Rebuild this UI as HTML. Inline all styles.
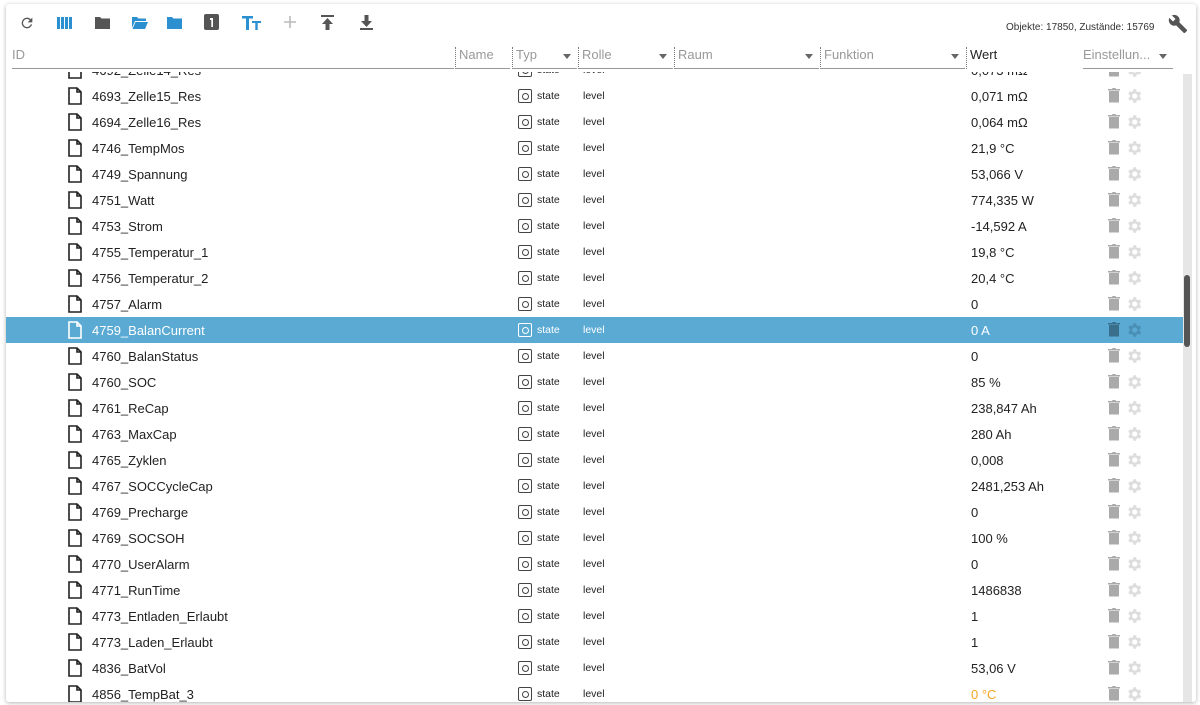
<!DOCTYPE html>
<html><head><meta charset="utf-8"><style>
*{box-sizing:border-box;margin:0;padding:0}
body{width:1200px;height:705px;background:#fff;font-family:"Liberation Sans",sans-serif;color:#222;overflow:hidden;position:relative}
.card{position:absolute;left:6px;top:4px;width:1190px;height:698px;background:#fff;box-shadow:0 1px 4px rgba(0,0,0,.3);border-radius:3px;overflow:hidden}
.tb svg{position:absolute}
.cnt{position:absolute;left:1000px;top:18px;font-size:10px;color:#333}
.hd{position:absolute;top:43px;font-size:13px;color:#999;height:22px;border-bottom:1px solid #999}
.hd.sep{border-left:1px dotted #777;padding-left:3px}
.arr{position:absolute;right:6px;top:7px;width:0;height:0;border-left:4px solid transparent;border-right:4px solid transparent;border-top:5px solid #666}
.body{position:absolute;left:0;top:68px;width:1177px;height:630px;overflow:hidden}
.row{position:absolute;left:0;width:1177px;height:26px;font-size:13px}
.row.sel{background:#5aaad4;color:#fff}
.fi{position:absolute;left:62px;top:4px}
.nm{position:absolute;left:86px;top:6px}
.ti{position:absolute;left:512px;top:6px;width:14px;height:14px;border:1.3px solid #444;border-radius:2px}
.ti:after{content:"";position:absolute;left:3px;top:3px;width:5px;height:5px;border:1.2px solid #444;border-radius:50%}
.sel .ti,.sel .ti:after{border-color:#fff}
.st{position:absolute;left:531px;top:7px;font-size:10.5px}
.lv{position:absolute;left:577px;top:7px;font-size:10.5px}
.wv{position:absolute;left:965px;top:6px}
.tr{position:absolute;left:1102px;top:5px}
.gr{position:absolute;left:1119px;top:4px}
.sb{position:absolute;left:1177px;top:70px;width:9px;height:628px;background:#e6e6e6}
.th{position:absolute;left:1px;top:201px;width:6px;height:72px;background:#555;border-radius:3px}
</style></head><body>
<div class="card">
<div class="tb">
<svg style="left:13px;top:11px" width="16" height="16" viewBox="0 0 24 24"><path fill="#555" d="M17.65 6.35A7.96 7.96 0 0 0 12 4a8 8 0 1 0 7.73 10h-2.08A6 6 0 1 1 12 6c1.66 0 3.140.69 4.22 1.78L13 11h7V4l-2.35 2.35z"/></svg>
<svg style="left:51px;top:12px" width="16" height="14" viewBox="0 0 16 14"><rect x="0" y="1" width="3" height="12" fill="#2c8fd0"/><rect x="4" y="1" width="3" height="12" fill="#2c8fd0"/><rect x="8" y="1" width="3" height="12" fill="#2c8fd0"/><rect x="12" y="1" width="3" height="12" fill="#2c8fd0"/></svg>
<svg style="left:89px;top:12px" width="15" height="13" viewBox="0 0 15 13"><path fill="#555" d="M0 1h5l1.5 1.5H15V13H0z"/></svg>
<svg style="left:126px;top:12px" width="16" height="13" viewBox="0 0 16 13"><path fill="#2c8fd0" d="M0 1h5l1.5 1.5H14V5H3L0 12zM3.5 6H16l-3 7H0.5z"/></svg>
<svg style="left:161px;top:12px" width="15" height="13" viewBox="0 0 15 13"><path fill="#2c8fd0" d="M0 1h5l1.5 1.5H15V13H0z"/></svg>
<svg style="left:198px;top:10px" width="15" height="16" viewBox="0 0 15 16"><rect width="15" height="16" rx="2" fill="#555"/><path fill="#fff" d="M6 4h3v9H7.3V6H6z"/></svg>
<svg style="left:236px;top:12px" width="22" height="14" viewBox="0 0 22 14"><path fill="#2c8fd0" d="M0 0h11v2.5H7V14H4V2.5H0zM10 5h9v2h-3.3v7h-2.4V7H10z"/></svg>
<svg style="left:277px;top:11px" width="14" height="14" viewBox="0 0 14 14"><path stroke="#bbb" stroke-width="1.6" d="M7 1v12M1 7h12"/></svg>
<svg style="left:315px;top:11px" width="13" height="15" viewBox="0 0 13 15"><path fill="#555" d="M0 0h13v2H0zM6.5 3L12 9H8.5v6h-4V9H1z"/></svg>
<svg style="left:354px;top:11px" width="13" height="15" viewBox="0 0 13 15"><path fill="#555" d="M4.5 0h4v6H12l-5.5 6L1 6h3.5zM0 13h13v2H0z"/></svg>
</div>
<div class="cnt">Objekte: 17850, Zustände: 15769</div>
<svg style="position:absolute;left:1162px;top:10px" width="20" height="20" viewBox="0 0 24 24"><path fill="#555" d="M22.7 19l-9.1-9.1c.9-2.3.4-5-1.5-6.9-2-2-5-2.4-7.4-1.3L9 6 6 9 1.6 4.7C.4 7.1.9 10.1 2.9 12.1c1.9 1.9 4.6 2.4 6.9 1.5l9.1 9.1c.4.4 1 .4 1.4 0l2.300-2.3c.5-.4.5-1.100.1-1.4z"/></svg>
<div class="hd" style="left:6px;width:442px">ID</div>
<div class="hd sep" style="left:449px;width:55px">Name</div>
<div class="hd sep" style="left:506px;width:65px">Typ<span class="arr"></span></div>
<div class="hd sep" style="left:572px;width:95px">Rolle<span class="arr"></span></div>
<div class="hd sep" style="left:668px;width:145px">Raum<span class="arr"></span></div>
<div class="hd sep" style="left:814px;width:145px">Funktion<span class="arr"></span></div>
<div class="hd sep" style="left:960px;width:110px;color:#222;border-bottom:none">Wert</div>
<div class="hd" style="left:1077px;width:90px">Einstellun...<span class="arr"></span></div>
<div class="body" id="b">
<svg width="0" height="0" style="position:absolute"><defs>
<symbol id="f" viewBox="0 0 14 18"><path fill="none" stroke="currentColor" stroke-width="1.6" d="M1 1h8l4 4v12H1zM9 1v4h4"/></symbol>
<symbol id="t" viewBox="0 0 12 15"><path fill="currentColor" d="M1 3h10v11.5H1zM0 1h4l.5-1h3l.5 1h4v1.5H0z"/></symbol>
<symbol id="g" viewBox="0 0 24 24"><path fill="currentColor" d="M19.4 13a7.5 7.5 0 0 0 0-2l2.1-1.6-2-3.5-2.5 1a7 7 0 0 0-1.7-1L15 3h-4l-.4 2.7a7 7 0 0 0-1.7 1l-2.5-1-2 3.5L6.5 11a7.5 7.5 0 0 0 0 2l-2.1 1.6 2 3.5 2.5-1a7 7 0 0 0 1.7 1L11 21h4l.4-2.7a7 7 0 0 0 1.7-1l2.5 1 2-3.5zM13 15.5a3.5 3.5 0 1 1 0-7 3.5 3.5 0 0 1 0 7z"/></symbol>
</defs></svg>
</div>
<div class="sb"><div class="th"></div></div>
</div>
<script>
var d=[["4692_Zelle14_Res","0,073 mΩ"],["4693_Zelle15_Res","0,071 mΩ"],["4694_Zelle16_Res","0,064 mΩ"],["4746_TempMos","21,9 °C"],["4749_Spannung","53,066 V"],["4751_Watt","774,335 W"],["4753_Strom","-14,592 A"],["4755_Temperatur_1","19,8 °C"],["4756_Temperatur_2","20,4 °C"],["4757_Alarm","0"],["4759_BalanCurrent","0 A"],["4760_BalanStatus","0"],["4760_SOC","85 %"],["4761_ReCap","238,847 Ah"],["4763_MaxCap","280 Ah"],["4765_Zyklen","0,008"],["4767_SOCCycleCap","2481,253 Ah"],["4769_Precharge","0"],["4769_SOCSOH","100 %"],["4770_UserAlarm","0"],["4771_RunTime","1486838"],["4773_Entladen_Erlaubt","1"],["4773_Laden_Erlaubt","1"],["4836_BatVol","53,06 V"],["4856_TempBat_3","0 °C"]];
var h="";d.forEach(function(r,i){var s=i==10;var top=-15+i*26;
h+='<div class="row'+(s?' sel':'')+'" style="top:'+top+'px"><svg class="fi" width="14" height="18" style="color:'+(s?'#fff':'#222')+'"><use href="#f"/></svg><span class="nm">'+r[0]+'</span><span class="ti"></span><span class="st">state</span><span class="lv">level</span><span class="wv"'+(i==24?' style="color:#f5a623"':'')+'>'+r[1]+'</span><svg class="tr" width="12" height="15" style="color:'+(s?'#3a6f8c':'#aaa')+'"><use href="#t"/></svg><svg class="gr" width="18" height="18" style="color:'+(s?'#4a8fb4':'#ddd')+'"><use href="#g"/></svg></div>';});
document.getElementById('b').insertAdjacentHTML('beforeend',h);
</script>
</body></html>
